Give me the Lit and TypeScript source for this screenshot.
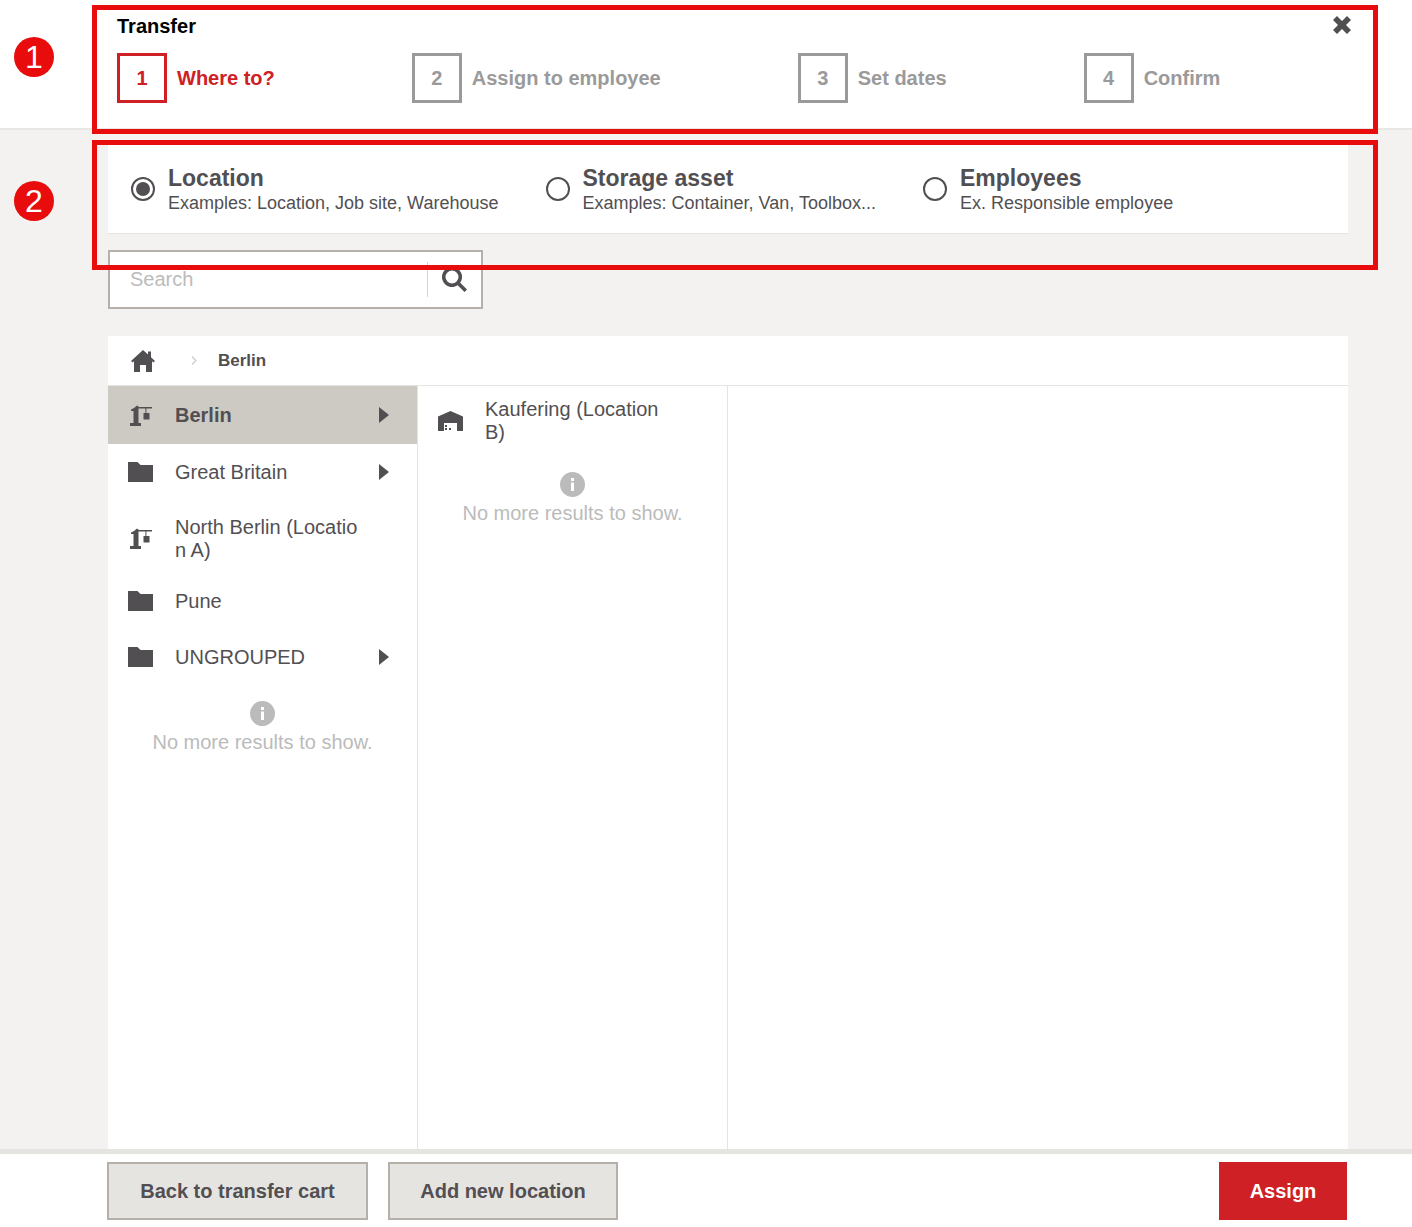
import { LitElement, css, html, svg } from 'lit'
import { customElement } from 'lit/decorators.js'
import { classMap } from 'lit/directives/class-map.js'

const STEPS = ['Where to?', 'Assign to employee', 'Set dates', 'Confirm']

const TARGETS = [
   { title: 'Location', text: 'Examples: Location, Job site, Warehouse', checked: true },
   { title: 'Storage asset', text: 'Examples: Container, Van, Toolbox...', checked: false },
   { title: 'Employees', text: 'Ex. Responsible employee', checked: false },
]

const ROWS = [
   { icon: 'crane', label: 'Berlin', arrow: true, active: true },
   { icon: 'folder', label: 'Great Britain', arrow: true },
   { icon: 'crane', label: 'North Berlin (Locatio n A)', arrow: false, tall: true },
   { icon: 'folder', label: 'Pune', arrow: false },
   { icon: 'folder', label: 'UNGROUPED', arrow: true },
]

const crane = svg`<svg class="ico crane" viewBox="0 0 22 21"><path d="M4 3 7 .5 9 2h13v1.4h-5.6V8h-1V3.4H8.500V18H11v3H0v-3h3.500V6H1V4.500z"/><rect x="13.500" y="8" width="6" height="6.500"/></svg>`
const folder = svg`<svg class="ico folder" viewBox="0 0 25 20"><path d="M0 0h9.500l3 3H25v17H0z"/></svg>`
const warehouse = svg`<svg class="ico warehouse" viewBox="0 0 25 20"><path fill-rule="evenodd" d="M12.500 0 25 5.500V20H0V5.500zM6 12v8h13v-8z"/><rect x="7" y="14" width="2" height="2"/><rect x="7" y="17" width="2" height="2"/><rect x="11" y="17" width="2" height="2"/></svg>`

@customElement('app-root')
export class AppRoot extends LitElement {

   static styles = css`
      :host {
         display: block;
         height: 1227px;
         position: relative;
         overflow: hidden;
         font-family: "Liberation Sans", Arial, sans-serif;
         color: #524f53;
         background: #f3f2f0;
      }

      .page {
         display: flex;
         flex-direction: column;
         height: 100%;
      }

      /* header with the steps */
      .header {
         height: 128px;
         box-sizing: border-box;
         padding: 14px 61px 0 117px;
         background: #fff;
         border-bottom: 2px solid #e8e7e4;
         flex: none;
         height: 130px;
      }

      .title-row {
         display: flex;
         justify-content: space-between;
         align-items: flex-start;
      }

      .title {
         font-size: 20px;
         line-height: 24px;
         font-weight: bold;
         color: #000;
      }

      .close {
         width: 18px;
         height: 18px;
         margin-top: 2px;
         fill: #524f53;
      }

      .steps {
         display: flex;
         gap: 137px;
         margin-top: 15px;
      }

      .step {
         display: flex;
         align-items: center;
         gap: 10px;
         font-size: 20px;
         font-weight: bold;
         color: #9b9a9a;
      }

      .step.current {
         color: #cf2026;
      }

      .step-box {
         width: 50px;
         height: 50px;
         box-sizing: border-box;
         border: 3px solid #9b9a9a;
         display: flex;
         align-items: center;
         justify-content: center;
      }

      .step.current .step-box {
         border-color: #cf2026;
      }

      /* main part */
      .content {
         flex: 1;
         min-height: 0;
         display: flex;
         flex-direction: column;
         padding: 15px 64px 0 108px;
      }

      .targets {
         height: 89px;
         box-sizing: border-box;
         flex: none;
         display: flex;
         align-items: center;
         gap: 47px;
         padding: 0 0 0 23px;
         background: #fff;
         border-bottom: 1px solid #e6e4e0;
      }

      .target {
         display: flex;
         align-items: center;
         gap: 13px;
      }

      .radio {
         width: 24px;
         height: 24px;
         box-sizing: border-box;
         border: 2px solid #524f53;
         border-radius: 50%;
         display: flex;
         align-items: center;
         justify-content: center;
      }

      .radio.checked::after {
         content: '';
         width: 14px;
         height: 14px;
         border-radius: 50%;
         background: #524f53;
      }

      .target-title {
         font-size: 23px;
         line-height: 27px;
         font-weight: bold;
      }

      .target-text {
         font-size: 18px;
         line-height: 22px;
      }

      .search {
         width: 375px;
         height: 59px;
         box-sizing: border-box;
         flex: none;
         margin-top: 16px;
         border: 2px solid #b5b1aa;
         background: #fff;
         display: flex;
         align-items: center;
      }

      .search-text {
         flex: 1;
         padding-left: 20px;
         font-size: 20px;
         color: #bbb;
      }

      .search-btn {
         width: 54px;
         height: 35px;
         box-sizing: border-box;
         border-left: 1px solid #d8d6d2;
         display: flex;
         align-items: center;
         justify-content: center;
      }

      .search-btn svg {
         width: 25px;
         height: 25px;
         fill: #524f53;
      }

      .crumbs {
         height: 50px;
         box-sizing: border-box;
         flex: none;
         margin-top: 27px;
         display: flex;
         align-items: center;
         padding-left: 23px;
         background: #fff;
         border-bottom: 1px solid #e6e4e0;
         font-size: 17px;
         font-weight: bold;
      }

      .home {
         width: 24px;
         height: 22px;
         fill: #524f53;
      }

      .chevron {
         width: 6px;
         height: 9px;
         margin: 0 21px 0 36px;
         fill: none;
         stroke: #ccc;
         stroke-width: 1.200;
      }

      .columns {
         flex: 1;
         min-height: 0;
         display: grid;
         grid-template-columns: 310px 310px 1fr;
         background: #fff;
      }

      .column {
         border-right: 1px solid #e6e4e0;
      }

      .column:last-child {
         border-right: none;
      }

      .row {
         height: 56px;
         box-sizing: border-box;
         display: flex;
         align-items: center;
         padding: 0 28px 0 20px;
         font-size: 20px;
         line-height: 23px;
      }

      .row.active {
         height: 58px;
         background: #cdcac3;
         font-weight: bold;
      }

      .row.tall {
         height: 73px;
         padding-top: 4px;
      }

      .row.single {
         height: 70px;
         padding-right: 60px;
      }

      .row-icon {
         width: 25px;
         flex: none;
         display: flex;
         margin-right: 22px;
      }

      .ico {
         fill: #524f53;
      }

      .ico.crane {
         width: 22px;
         height: 21px;
         margin-left: 2px;
      }

      .ico.folder, .ico.warehouse {
         width: 25px;
         height: 20px;
      }

      .row-label {
         flex: 1;
         max-width: 184px;
         overflow-wrap: anywhere;
      }

      .arrow {
         width: 10px;
         height: 16px;
         margin-left: auto;
         fill: #524f53;
      }

      .no-more {
         display: flex;
         flex-direction: column;
         align-items: center;
         margin-top: 16px;
         font-size: 20px;
         line-height: 23px;
         color: #bbb;
      }

      .no-more svg {
         width: 25px;
         height: 25px;
         margin-bottom: 5px;
      }

      /* footer */
      .footer {
         height: 78px;
         box-sizing: border-box;
         flex: none;
         display: flex;
         gap: 20px;
         padding: 8px 65px 7px 107px;
         background: #fff;
         border-top: 5px solid #e6e4e0;
      }

      .btn {
         box-sizing: border-box;
         height: 58px;
         display: flex;
         align-items: center;
         justify-content: center;
         border: 2px solid #b5b1aa;
         background: #e6e4e0;
         font-size: 20px;
         font-weight: bold;
      }

      .btn.back { width: 261px; }
      .btn.add { width: 230px; }

      .btn.assign {
         width: 128px;
         margin-left: auto;
         border: none;
         background: #cf2026;
         color: #fff;
      }

      /* red marks lying over the screen */
      .mark {
         position: absolute;
         left: 92px;
         width: 1286px;
         box-sizing: border-box;
         border: 5px solid #e80c0c;
      }

      .mark.one { top: 5px; height: 129px; }
      .mark.two { top: 140px; height: 130px; }

      .badge {
         position: absolute;
         left: 14px;
         width: 40px;
         height: 40px;
         border-radius: 50%;
         background: #e80c0c;
         color: #fff;
         font-size: 32px;
         line-height: 40px;
         text-align: center;
      }

      .badge.one { top: 37px; }
      .badge.two { top: 181px; }
   `

   renderInfo() {
      return html`
         <div class="no-more">
            <svg viewBox="0 0 25 25">
               <circle cx="12.500" cy="12.500" r="12.500" fill="#bbb"/>
               <rect x="11" y="10.500" width="3" height="8.500" fill="#fff"/>
               <rect x="11" y="6" width="3" height="3" fill="#fff"/>
            </svg>
            No more results to show.
         </div>
      `
   }

   renderRow(row: any) {
      return html`
         <div class=${classMap({ row: true, active: !!row.active, tall: !!row.tall })}>
            <span class="row-icon">${row.icon === 'crane' ? crane : folder}</span>
            <span class="row-label">${row.label}</span>
            ${row.arrow
               ? html`<svg class="arrow" viewBox="0 0 10 16"><path d="M0 0 10 8 0 16z"/></svg>`
               : ''
            }
         </div>
      `
   }

   render() {
      return html`
         <div class="page">
            <div class="header">
               <div class="title-row">
                  <div class="title">Transfer</div>
                  <svg class="close" viewBox="0 0 18 18"><path d="M4 0 9 5 14 0 18 4 13 9 18 14 14 18 9 13 4 18 0 14 5 9 0 4z"/></svg>
               </div>
               <div class="steps">
                  ${STEPS.map((label, i) => html`
                     <div class=${classMap({ step: true, current: i === 0 })}>
                        <div class="step-box">${i + 1}</div>
                        <span>${label}</span>
                     </div>
                  `)}
               </div>
            </div>

            <div class="content">
               <div class="targets">
                  ${TARGETS.map(t => html`
                     <div class="target">
                        <div class=${classMap({ radio: true, checked: t.checked })}></div>
                        <div>
                           <div class="target-title">${t.title}</div>
                           <div class="target-text">${t.text}</div>
                        </div>
                     </div>
                  `)}
               </div>

               <div class="search">
                  <div class="search-text">Search</div>
                  <div class="search-btn">
                     <svg viewBox="0 0 25 25"><path fill-rule="evenodd" d="M10 0a10 10 0 0 1 8.200 15.700L25 22.500 22.500 25l-6.800-6.800A10 10 0 1 1 10 0zm0 3.500a6.500 6.500 0 1 0 0 13 6.500 6.500 0 0 0 0-13z"/></svg>
                  </div>
               </div>

               <div class="crumbs">
                  <svg class="home" viewBox="0 0 24 22"><path d="M12 0 17 4.500V1.500h3v5.700L24 11l-1.500 1.500L21 11.200V22h-6v-7H9v7H3V11.200L1.500 12.500 0 11z"/></svg>
                  <svg class="chevron" viewBox="0 0 6 9"><path d="M1 .5 5 4.500 1 8.500"/></svg>
                  <span>Berlin</span>
               </div>

               <div class="columns">
                  <div class="column">
                     ${ROWS.map(row => this.renderRow(row))}
                     ${this.renderInfo()}
                  </div>
                  <div class="column">
                     <div class="row single">
                        <span class="row-icon">${warehouse}</span>
                        <span class="row-label">Kaufering (Location B)</span>
                     </div>
                     ${this.renderInfo()}
                  </div>
                  <div class="column"></div>
               </div>
            </div>

            <div class="footer">
               <div class="btn back">Back to transfer cart</div>
               <div class="btn add">Add new location</div>
               <div class="btn assign">Assign</div>
            </div>
         </div>

         <div class="mark one"></div>
         <div class="mark two"></div>
         <div class="badge one">1</div>
         <div class="badge two">2</div>
      `
   }
}
